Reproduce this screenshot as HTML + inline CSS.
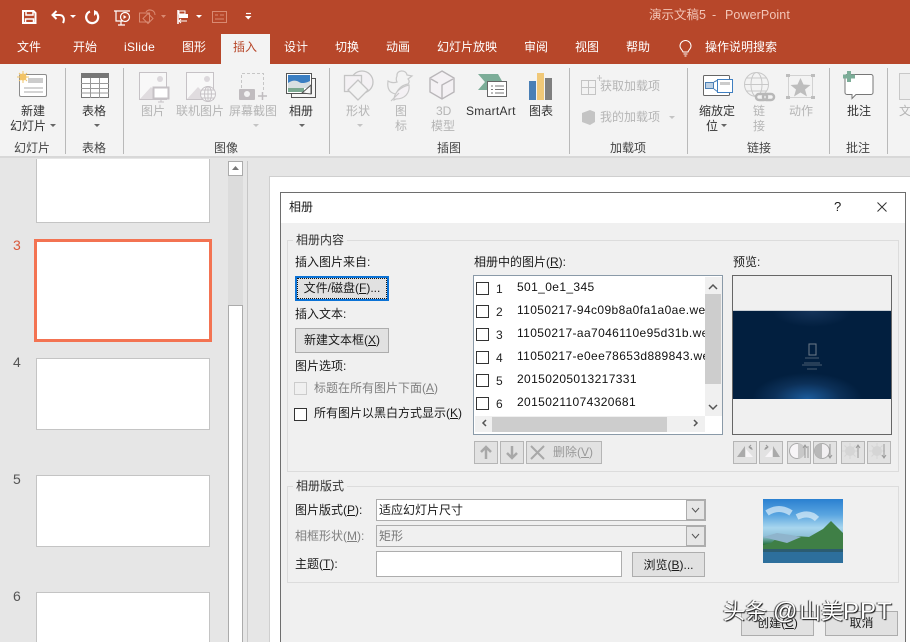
<!DOCTYPE html>
<html lang="zh"><head><meta charset="utf-8"><style>
html,body{margin:0;padding:0;width:910px;height:642px;overflow:hidden}
body{position:relative;background:#e6e6e6;font-family:"Liberation Sans","Noto Sans CJK SC",sans-serif;font-size:12px;color:#222}
div,span,svg{position:absolute;box-sizing:border-box;white-space:nowrap}
u{text-decoration:underline}
.tab{top:33px;height:30px;line-height:29px;color:#fff;font-size:12px}
.rl{font-size:12px;color:#333;text-align:center;line-height:15px}
.dis{color:#b5b5b5}
.gl{top:141px;font-size:12px;color:#444;line-height:14px}
.sep{top:68px;width:1px;height:86px;background:#b9b9b9}
.t{font-size:12px;line-height:16px;color:#1a1a1a}
.btn{background:#e1e1e1;border:1px solid #adadad;text-align:center;color:#1a1a1a}
.cb{width:13px;height:13px;border:1px solid #333;background:#fff}
.li{left:517px;font-size:12px;line-height:16px;width:188px;overflow:hidden;color:#111;letter-spacing:.38px}
.n{left:496px;font-size:12px;line-height:14px;color:#222}
.db{background:#e2e2e2;border:1px solid #b5b5b5;top:441px;height:23px}
.th{background:#fff;border:1px solid #c4c4c4;left:36px;width:174px}
.num{left:13px;font-size:14px;color:#555;line-height:16px}
.wm{top:599px;font-size:22px;line-height:26px;color:#fff;text-shadow:1px 1px 1px #111,-1px 0 1px #333}
</style></head><body>
<!-- title bar -->
<div style="left:0;top:0;width:910px;height:64px;background:#b7472a"></div>
<svg style="left:0;top:0" width="270" height="32" fill="none" stroke="#fff">
<path d="M23 11h10.500l2 2v10h-12.500z" stroke-width="2"/><path d="M26 10.500v4.500h7v-4.500" stroke-width="1.500"/><path d="M25.500 23.500v-4.500h8v4.500" stroke-width="1.500"/>
<path d="M56.500 11l-4 4 4 4M52.500 15h7c4 0 5.500 4 3.500 8" stroke-width="2"/><path d="M70 15h6l-3 3z" fill="#fff" stroke="none"/>
<path d="M90 11.500a6 6 0 1 0 6 1" stroke-width="2.200"/><path d="M94 10v6l4-4z" fill="#fff" stroke="none"/>
<path d="M114 11h16M116 11v10h7M121 21v4M118 25h7" stroke-width="1.200"/><circle cx="125" cy="17" r="4.500" stroke-width="1.200"/><path d="M123.500 15v4l3-2z" fill="#fff" stroke="none"/>
<g stroke="#d98a72"><path d="M139.500 13h10v9h-10zM148 23.500l-5-5 5-5 5 5z"/><path d="M146 12a5 5 0 0 1 9 3"/></g><path d="M161 15h5l-2.500 3z" fill="#d98a72" stroke="none"/>
<path d="M178 10v14" stroke-width="1.500"/><path d="M179 11h6v3h-6z" stroke-width="1"/><path d="M179 14h9v4h-9z" fill="#fff" stroke="none"/><path d="M187 21h-8l2-2m-2 2l2 2" stroke-width="1"/><path d="M196 15h6l-3 3z" fill="#fff" stroke="none"/>
<path d="M212.500 11.500h14v11h-14zM215 15h3M220 15h4M215 19h9" stroke="#d98a72"/>
<path d="M246 13.500h5" stroke-width="1.200"/><path d="M245 16h6.500l-3.250 3.500z" fill="#fff" stroke="none"/>
</svg>
<div style="left:649px;top:7px;color:#f3c6b8;font-size:12.500px;line-height:16px">演示文稿5</div>
<div style="left:712px;top:7px;color:#f3c6b8;font-size:12.500px;line-height:16px">-</div>
<div style="left:725px;top:7px;color:#f3c6b8;font-size:12.500px;line-height:16px;letter-spacing:.1px">PowerPoint</div>
<!-- tabs -->
<div style="left:221px;top:34px;width:49px;height:30px;background:#f3f3f3"></div>
<div class="tab" style="left:17px">文件</div><div class="tab" style="left:73px">开始</div><div class="tab" style="left:124px;letter-spacing:.3px">iSlide</div><div class="tab" style="left:182px">图形</div>
<div class="tab" style="left:233px;color:#b7472a">插入</div><div class="tab" style="left:284px">设计</div><div class="tab" style="left:335px">切换</div><div class="tab" style="left:386px">动画</div><div class="tab" style="left:437px">幻灯片放映</div><div class="tab" style="left:524px">审阅</div><div class="tab" style="left:575px">视图</div><div class="tab" style="left:626px">帮助</div><div class="tab" style="left:705px">操作说明搜索</div>
<svg style="left:678px;top:40px" width="16" height="18" fill="none" stroke="#fff"><path d="M5 12c-.5-2-3-3-3-6a5.500 5.500 0 0 1 11 0c0 3-2.500 4-3 6zM5.500 14h4M6.500 16h2"/></svg>
<!-- ribbon -->
<div style="left:0;top:64px;width:910px;height:94px;background:#f3f3f3;border-bottom:2px solid #d8d8d8"></div>
<div class="sep" style="left:65px"></div><div class="sep" style="left:123px"></div><div class="sep" style="left:329px"></div><div class="sep" style="left:569px"></div><div class="sep" style="left:687px"></div><div class="sep" style="left:829px"></div><div class="sep" style="left:887px"></div>
<svg style="left:0;top:64px" width="910" height="76" fill="none">
<rect x="19.500" y="10.500" width="27" height="22" rx="1.500" fill="#fff" stroke="#8c8c8c"/><rect x="28" y="14" width="15" height="5" fill="#ccc"/><path d="M24 24h19M24 28h19" stroke="#aaa"/><circle cx="23" cy="13" r="3.500" fill="#f2c468"/><path d="M23 7v12M17 13h12M19 9l8 8M27 9l-8 8" stroke="#f2c468"/>
<rect x="81.500" y="9.500" width="27" height="24" fill="#fff" stroke="#777"/><rect x="81" y="9" width="28" height="5" fill="#777"/><path d="M81 19.500h28M81 24.500h28M81 29h28M90.500 14v20M99.500 14v20" stroke="#999"/>
<g stroke="#c6c2c6"><rect x="139.500" y="8.500" width="27" height="27" fill="#f8f8f8"/><path d="M140 35l11-12 8 8v4z" fill="#e0dcdf" stroke="none"/><circle cx="160" cy="15" r="3" fill="#dcd8dc" stroke="none"/><rect x="153.500" y="23.500" width="15" height="11" fill="#fff" stroke-width="2"/><path d="M161 35v3M158 38h6"/></g>
<g stroke="#c6c2c6"><rect x="186.500" y="8.500" width="27" height="27" fill="#f8f8f8"/><path d="M187 35l11-12 8 8v4z" fill="#e0dcdf" stroke="none"/><circle cx="207" cy="15" r="3" fill="#dcd8dc" stroke="none"/><circle cx="208" cy="30" r="7.500" fill="#f8f8f8"/><path d="M200.500 30h15M208 22.500v15M202 26h12M202 34h12"/><ellipse cx="208" cy="30" rx="3.500" ry="7.500"/></g>
<path d="M241.500 24V9.500h22v18" stroke="#c6c6c6" stroke-dasharray="3 2"/><rect x="239" y="25" width="16" height="11" rx="1" fill="#c0bcbf"/><circle cx="247" cy="30" r="3" fill="#f3f3f3"/><path d="M258 32h9M262.500 28v8" stroke="#c0bcbf" stroke-width="1.500"/>
<rect x="291.500" y="14.500" width="24" height="19" fill="#f6f6f6" stroke="#555"/><rect x="286.500" y="9.500" width="25" height="20" fill="#fff" stroke="#555"/><rect x="288" y="11" width="22" height="8" fill="#3a7ec2"/><path d="M288 19c4-3 8-3 11-1s7 1 11-1v7h-22z" fill="#d8dfe2"/><rect x="288" y="24" width="16" height="4" fill="#7aa890"/><path d="M302 29l9-8v9z" fill="#f7f7f7" stroke="#555"/>
<g stroke="#c4c4c4" stroke-width="1.300"><circle cx="362" cy="18" r="11" fill="#f4f1f4"/><rect x="344.500" y="11.500" width="17" height="16" fill="#f4f1f4"/><path d="M358 36l-10-10 10-10 10 10z" fill="#f3f3f3"/></g>
<g stroke="#c8c8c8" stroke-width="1.200"><path d="M397 12c-1-6 9-7 10-1l5 1-4 3c2 2 1 4 0 5-6 1-10 5-12 10-7-1-9-6-8-13 3 2 6 2 9 1-1-2-1-4 0-6z"/><path d="M394 36c0-7 6-13 15-15 1 8-4 14-13 14zM391 37l8-8" fill="#f4f1f4"/></g>
<g stroke="#b9b6b9" stroke-width="1.400"><path d="M442 7l12 7v14l-12 7-12-7V14z" fill="#f4f1f4"/><path d="M431 15l7 4M453 15l-11 6v14"/></g>
<path d="M478 10h20l4 7h-12v9h-12l7-8z" fill="#7cad98"/><rect x="487.500" y="17.500" width="19" height="15" fill="#fff" stroke="#666"/><path d="M491 22h2M495 22h9M491 25.500h2M495 25.500h9M491 29h2M495 29h9" stroke="#777"/>
<rect x="529" y="17" width="7" height="19" fill="#4a7fb5"/><rect x="537" y="9" width="7" height="27" fill="#f0c878"/><rect x="545" y="14" width="7" height="22" fill="#7f7f7f"/>
<path d="M581.500 16.500h14v14h-14zM581.500 23.500h14M588.500 16.500v14M597 14h5M599.500 11v6" stroke="#c4c4c4"/>
<path d="M582 49l8-3 5 2v10l-5 3-8-3z" fill="#c4c4c4"/>
<rect x="703.500" y="11.500" width="26" height="20" rx="1" fill="#fff" stroke="#666"/><rect x="705.500" y="18.500" width="8" height="6" fill="#bcd0e4" stroke="#4a7fb5"/><path d="M714 18l4-2M714 25l4 3" stroke="#4a7fb5"/><rect x="717.500" y="15.500" width="15" height="13" fill="#fff" stroke="#3f7fc1"/><rect x="720" y="18" width="10" height="3" fill="#ccc"/>
<g stroke="#c8c8c8"><circle cx="756.500" cy="20.500" r="12"/><ellipse cx="756.500" cy="20.500" rx="5.500" ry="12"/><path d="M744.500 20.500h24M746.500 14h20M746.500 27h20"/></g>
<rect x="756" y="30" width="11" height="6" rx="3" stroke="#b8b8b8" stroke-width="2.500" fill="#f3f3f3"/><rect x="763" y="30" width="11" height="6" rx="3" stroke="#b8b8b8" stroke-width="2.500"/>
<rect x="788.500" y="11.500" width="24" height="22" stroke="#d2d2d2"/><path d="M800.500 14l3 6.500 7 .5-5.500 4.500 2 7-6.500-4-6.500 4 2-7-5.500-4.500 7-.5z" fill="#bdbdbd"/><path d="M786 10h4v3h-4zM811 10h4v3h-4zM786 32h4v3h-4zM811 32h4v3h-4z" fill="#bdbdbd"/>
<path d="M847 10.500h24a2 2 0 0 1 2 2v16a2 2 0 0 1-2 2h-15l-4 4v-4h-5a2 2 0 0 1-2-2v-16a2 2 0 0 1 2-2z" fill="#fff" stroke="#777"/><path d="M843 12.500h12M849 7v11" stroke="#7cad98" stroke-width="4"/>
<rect x="899.500" y="9.500" width="12" height="26" fill="#eee" stroke="#c8c8c8"/>
</svg>
<div class="rl" style="left:17px;top:104px;width:32px">新建</div><div class="rl" style="left:10px;top:119px">幻灯片</div>
<div class="rl" style="left:82px;top:104px">表格</div><div class="rl dis" style="left:141px;top:104px">图片</div><div class="rl dis" style="left:176px;top:104px">联机图片</div><div class="rl dis" style="left:229px;top:104px">屏幕截图</div><div class="rl" style="left:289px;top:104px">相册</div>
<div class="rl dis" style="left:346px;top:104px">形状</div><div class="rl dis" style="left:395px;top:104px">图</div><div class="rl dis" style="left:395px;top:119px">标</div><div class="rl dis" style="left:436px;top:104px">3D</div><div class="rl dis" style="left:431px;top:119px">模型</div>
<div class="rl" style="left:466px;top:104px;letter-spacing:.3px">SmartArt</div><div class="rl" style="left:529px;top:104px">图表</div>
<div class="rl dis" style="left:600px;top:79px">获取加载项</div><div class="rl dis" style="left:600px;top:110px">我的加载项</div>
<div class="rl" style="left:699px;top:104px">缩放定</div><div class="rl" style="left:706px;top:119px">位</div><div class="rl dis" style="left:753px;top:104px">链</div><div class="rl dis" style="left:753px;top:119px">接</div><div class="rl dis" style="left:789px;top:104px">动作</div><div class="rl" style="left:847px;top:104px">批注</div><div class="rl dis" style="left:899px;top:104px">文</div>
<svg style="left:0;top:110px" width="760" height="24" fill="#666">
<path d="M50 14h6l-3 3zM94 14h6l-3 3zM299 14h6l-3 3zM721 14h6l-3 3z"/>
<path d="M253 14h6l-3 3zM357 14h6l-3 3zM669 6h6l-3 3z" fill="#c4c4c4"/>
</svg>
<div class="gl" style="left:14px">幻灯片</div><div class="gl" style="left:82px">表格</div><div class="gl" style="left:214px">图像</div><div class="gl" style="left:437px">插图</div><div class="gl" style="left:610px">加载项</div><div class="gl" style="left:747px">链接</div><div class="gl" style="left:846px">批注</div>
<!-- left panel -->
<div class="th" style="top:159px;height:64px;border-top:0"></div>
<div style="left:34px;top:239px;width:178px;height:103px;background:#fff;border:3px solid #f37352"></div>
<div class="th" style="top:358px;height:72px"></div><div class="th" style="top:475px;height:72px"></div><div class="th" style="top:592px;height:50px;border-bottom:0"></div>
<div class="num" style="left:13px;top:237px;color:#d9583b">3</div><div class="num" style="top:354px">4</div><div class="num" style="top:471px">5</div><div class="num" style="top:588px">6</div>
<div style="left:228px;top:161px;width:15px;height:481px;background:#dcdcdc"></div>
<div style="left:228px;top:161px;width:15px;height:15px;background:#fff;border:1px solid #ababab"></div>
<svg style="left:228px;top:161px" width="15" height="15"><path d="M4 9h7L7.500 5z" fill="#777"/></svg>
<div style="left:228px;top:305px;width:15px;height:337px;background:#fff;border:1px solid #ababab;border-bottom:0"></div>
<div style="left:247px;top:161px;width:1px;height:481px;background:#c6c6c6"></div>
<div style="left:269px;top:176px;width:641px;height:466px;background:#fff;border:1px solid #cfcfcf;border-right:0;border-bottom:0"></div>
<!-- dialog -->
<div style="left:280px;top:192px;width:626px;height:450px;background:#f0f0f0;border:1px solid #6e6e6e;border-bottom:0"></div>
<div style="left:281px;top:193px;width:624px;height:30px;background:#fff"></div>
<div class="t" style="left:289px;top:199px">相册</div>
<div class="t" style="left:834px;top:199px;font-size:13px">?</div>
<svg style="left:877px;top:202px" width="10" height="10" stroke="#333"><path d="M.5 .5l9 9M9.500 .5l-9 9"/></svg>
<div style="left:287px;top:240px;width:612px;height:232px;border:1px solid #dcdcdc"></div>
<div class="t" style="left:293px;top:232px;background:#f0f0f0;padding:0 3px;color:#333">相册内容</div>
<div class="t" style="left:295px;top:254px">插入图片来自:</div>
<div class="btn" style="left:295px;top:276px;width:94px;height:25px;border:2px solid #0c73d6;line-height:20px;background:#e1e1e1;outline:1px dotted #111;outline-offset:-3px">文件/磁盘(<u>F</u>)...</div>
<div class="t" style="left:295px;top:306px">插入文本:</div>
<div class="btn" style="left:295px;top:328px;width:94px;height:25px;line-height:23px">新建文本框(<u>X</u>)</div>
<div class="t" style="left:295px;top:358px">图片选项:</div>
<div class="cb" style="left:294px;top:382px;border-color:#ccc;background:#f0f0f0"></div>
<div class="t" style="left:314px;top:380px;color:#808080">标题在所有图片下面(<u>A</u>)</div>
<div class="cb" style="left:294px;top:408px"></div>
<div class="t" style="left:314px;top:405px">所有图片以黑白方式显示(<u>K</u>)</div>
<div class="t" style="left:474px;top:254px">相册中的图片(<u>R</u>):</div>
<div style="left:473px;top:275px;width:250px;height:160px;background:#fff;border:1px solid #8a9aa8"></div>
<div class="cb" style="left:476px;top:282px"></div><div class="cb" style="left:476px;top:305px"></div><div class="cb" style="left:476px;top:328px"></div><div class="cb" style="left:476px;top:351px"></div><div class="cb" style="left:476px;top:374px"></div><div class="cb" style="left:476px;top:397px"></div>
<div class="n" style="top:282px">1</div><div class="n" style="top:305px">2</div><div class="n" style="top:328px">3</div><div class="n" style="top:351px">4</div><div class="n" style="top:374px">5</div><div class="n" style="top:397px">6</div>
<div class="li" style="top:279px">501_0e1_345</div><div class="li" style="top:302px">11050217-94c09b8a0fa1a0ae.webp</div><div class="li" style="top:325px">11050217-aa7046110e95d31b.webp</div><div class="li" style="top:348px">11050217-e0ee78653d889843.webp</div><div class="li" style="top:371px">20150205013217331</div><div class="li" style="top:394px">20150211074320681</div>
<div style="left:705px;top:277px;width:17px;height:139px;background:#f0f0f0"></div><div style="left:705px;top:294px;width:16px;height:90px;background:#cdcdcd"></div>
<div style="left:475px;top:416px;width:230px;height:16px;background:#f0f0f0"></div><div style="left:492px;top:417px;width:175px;height:15px;background:#cdcdcd"></div>
<svg style="left:475px;top:277px" width="247" height="157" fill="none" stroke="#555" stroke-width="1.500"><path d="M234 12l4-4 4 4M234 128l4 4 4-4M11 143l-3 3 3 3M219 143l3 3-3 3"/></svg>
<div class="db" style="left:474px;width:24px"></div><div class="db" style="left:500px;width:24px"></div><div class="db" style="left:526px;width:76px"></div>
<svg style="left:474px;top:440px" width="130" height="24" fill="none" stroke="#a8a8a8" stroke-width="2.500"><path d="M12 19V7M7 12l5-5 5 5M38 6v12M33 13l5 5 5-5"/><path d="M57 6l13 13M70 6L57 19" stroke-width="2"/></svg>
<div class="t dis" style="left:553px;top:444px;color:#999">删除(<u>V</u>)</div>
<div class="t" style="left:733px;top:254px">预览:</div>
<div style="left:732px;top:275px;width:160px;height:160px;background:#f0f0f0;border:1px solid #666"></div>
<div style="left:733px;top:310px;width:158px;height:89px;background:radial-gradient(ellipse 55px 26px at 47% 100%,#1c5c9c,#0c3058 60%,transparent),radial-gradient(ellipse 40px 16px at 50% 0,#15345a,transparent),#021f3f;border-top:1px solid #c8ced4"></div>
<svg style="left:733px;top:310px" width="158" height="89"><rect x="76" y="34" width="7" height="11" fill="none" stroke="#6d7b8a"/><path d="M72 48h14M71 53h16M69 55h20M74 59h10" stroke="#4a5c70"/></svg>
<div class="db" style="left:733px;width:24px"></div><div class="db" style="left:759px;width:24px"></div><div class="db" style="left:787px;width:24px"></div><div class="db" style="left:813px;width:24px"></div><div class="db" style="left:841px;width:24px"></div><div class="db" style="left:867px;width:24px"></div>
<svg style="left:730px;top:436px" width="165" height="32" fill="#aaa">
<path d="M7 21l8-11v11z"/><path d="M16 21v-8l7 8z" fill="#f7f5f7"/><path d="M21 13l-2-2 2-2M19 11c2 0 3 .5 3 3" fill="none" stroke="#999"/>
<path d="M50 21l-7-11v11z"/><path d="M42 21v-8l-7 8z" fill="#f7f5f7"/><path d="M36 13l2-2-2-2M38 11c-2 0-3 .5-3 3" fill="none" stroke="#999"/>
<circle cx="67" cy="15" r="7.500" fill="#f7f5f7" stroke="#aaa"/><path d="M68 7.500a7.500 7.500 0 0 1 0 15z" fill="#c8c8c8"/><path d="M75 22V9M73 12l2-3 2 3M78 22V10" fill="none" stroke="#999"/>
<circle cx="92" cy="15" r="7.500" fill="#f2f0f2" stroke="#aaa"/><path d="M92 7.500a7.500 7.500 0 0 0 0 15z" fill="#b8b8b8"/><path d="M100 8v14M98 19l2 3 2-3" fill="none" stroke="#999"/>
<circle cx="120" cy="15" r="5" fill="#d5d5d5"/><path d="M120 7v16M112 15h16M114.500 9.500l11 11M125.500 9.500l-11 11" stroke="#d5d5d5"/>
<circle cx="147" cy="15" r="5" fill="#d5d5d5"/><path d="M147 7v16M139 15h16M141.500 9.500l11 11M152.500 9.500l-11 11" stroke="#d5d5d5"/>
<path d="M128 22V9M126 12l2-3 2 3M154 8v14M152 19l2 3 2-3" fill="none" stroke="#999"/>
</svg>
<div style="left:287px;top:486px;width:612px;height:97px;border:1px solid #dcdcdc"></div>
<div class="t" style="left:293px;top:478px;background:#f0f0f0;padding:0 3px;color:#333">相册版式</div>
<div class="t" style="left:295px;top:502px">图片版式(<u>P</u>):</div>
<div style="left:376px;top:499px;width:330px;height:22px;background:#fff;border:1px solid #adadad"></div>
<div class="t" style="left:379px;top:502px">适应幻灯片尺寸</div>
<div class="t" style="left:295px;top:528px;color:#808080">相框形状(<u>M</u>):</div>
<div style="left:376px;top:525px;width:330px;height:22px;background:#f0f0f0;border:1px solid #adadad"></div>
<div class="t" style="left:379px;top:528px;color:#777">矩形</div>
<div style="left:686px;top:500px;width:19px;height:20px;background:#e6e6e6;border:1px solid #adadad"></div><div style="left:686px;top:526px;width:19px;height:20px;background:#e6e6e6;border:1px solid #adadad"></div>
<svg style="left:686px;top:500px" width="19" height="46" fill="none" stroke="#555"><path d="M6 8l3.500 4 3.500-4M6 34l3.500 4 3.500-4"/></svg>
<div class="t" style="left:295px;top:556px">主题(<u>T</u>):</div>
<div style="left:376px;top:551px;width:246px;height:26px;background:#fff;border:1px solid #adadad"></div>
<div class="btn" style="left:632px;top:552px;width:73px;height:25px;line-height:24px">浏览(<u>B</u>)...</div>
<div style="left:763px;top:499px;width:80px;height:64px;background:linear-gradient(#2a80d0 0,#5ba6e0 25%,#a8d6ee 45%,#8fc0d8 58%,#1e6d34 72%,#2e5c6c 78%,#1c5a8e 100%)"></div>
<svg style="left:763px;top:499px" width="80" height="64"><path d="M0 46l8-2 10-8 14 1 14 1 14-8 8-8 12 12v16H0z" fill="#3f7f46"/><path d="M0 38l14-4 14 2 10 2-14 6z" fill="#8fb4cc"/><path d="M0 53h80v11H0z" fill="#2d6f9c"/><path d="M4 14q12-8 24 0M34 18q12-6 20 2" stroke="#e8f4fa" stroke-width="6" fill="none" opacity=".65"/></svg>
<div class="btn" style="left:741px;top:611px;width:73px;height:25px;line-height:23px">创建(<u>C</u>)</div>
<div class="btn" style="left:825px;top:611px;width:73px;height:25px;line-height:23px">取消</div>
<div class="wm" style="left:723px">头条</div>
<div class="wm" style="left:773px;font-size:24px">@</div>
<div class="wm" style="left:799px">山美</div>
<div class="wm" style="left:843px;font-size:24px;letter-spacing:1px">PPT</div>
</body></html>
